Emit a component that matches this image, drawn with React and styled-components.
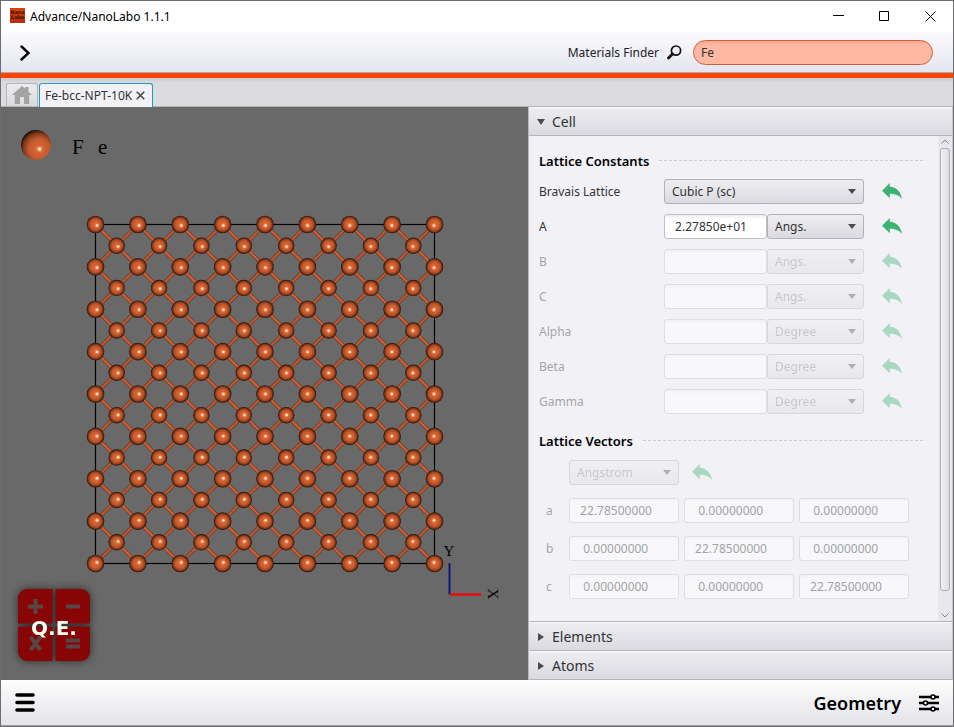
import React from 'react'
import styled, { createGlobalStyle } from 'styled-components';

const CONSTANTS = [
    { name: 'A', value: ' 2.27850e+01', unit: 'Angs.', enabled: true },
    { name: 'B', value: '', unit: 'Angs.' },
    { name: 'C', value: '', unit: 'Angs.' },
    { name: 'Alpha', value: '', unit: 'Degree' },
    { name: 'Beta', value: '', unit: 'Degree' },
    { name: 'Gamma', value: '', unit: 'Degree' },
]

const VECTORS = [
    { name: 'a', values: [' 22.78500000', '  0.00000000', '  0.00000000'] },
    { name: 'b', values: ['  0.00000000', ' 22.78500000', '  0.00000000'] },
    { name: 'c', values: ['  0.00000000', '  0.00000000', ' 22.78500000'] },
]

// bcc lattice seen along z
const CELLS = 8
const SIZE = 339
const STEP = SIZE / CELLS
const ORIGIN = { x: 94.5, y: 117.5 }

function buildLattice() {
    const corners = []
    const centers = []
    const bonds = []
    for (let j = 0; j <= CELLS; j++) {
        for (let i = 0; i <= CELLS; i++) {
            corners.push({ x: ORIGIN.x + i * STEP, y: ORIGIN.y + j * STEP })
        }
    }
    for (let j = 0; j < CELLS; j++) {
        for (let i = 0; i < CELLS; i++) {
            const x = ORIGIN.x + (i + 0.5) * STEP
            const y = ORIGIN.y + (j + 0.5) * STEP
            centers.push({ x, y })
            const h = STEP / 2
            bonds.push({ x, y, dx: -h, dy: -h }, { x, y, dx: h, dy: -h })
            bonds.push({ x, y, dx: -h, dy: h }, { x, y, dx: h, dy: h })
        }
    }
    return { corners, centers, bonds }
}

const LATTICE = buildLattice()

function Atom({ x, y, r }) {
    // the light sits in front of the middle of the cell
    const hx = x + (ORIGIN.x + SIZE / 2 - x) * 0.006 + 0.5
    const hy = y + (ORIGIN.y + SIZE / 2 - y) * 0.006
    return (
        <g>
            <circle cx={x} cy={y} r={r} fill="url(#atom)"/>
            <circle cx={hx} cy={hy} r="2.2" fill="#ff9a66" opacity="0.6"/>
            <circle cx={hx} cy={hy} r="1.2" fill="#ffe6d0"/>
        </g>
    )
}

function Scene() {
    return (
        <SceneSvg viewBox="0 0 527 573" role="img" aria-label="Fe bcc structure">
            <defs>
                <radialGradient id="atom">
                    <stop offset="0" stopColor="#de6838"/>
                    <stop offset="0.5" stopColor="#cb5c2d"/>
                    <stop offset="0.75" stopColor="#9c4521"/>
                    <stop offset="0.9" stopColor="#572411"/>
                    <stop offset="1" stopColor="#1e0b05"/>
                </radialGradient>
                <radialGradient id="legend" cx="0.6" cy="0.63" r="0.7">
                    <stop offset="0" stopColor="#e06c3c"/>
                    <stop offset="0.5" stopColor="#c2582c"/>
                    <stop offset="0.75" stopColor="#7c381c"/>
                    <stop offset="0.95" stopColor="#0c0503"/>
                </radialGradient>
            </defs>

            <circle cx="35" cy="38" r="15" fill="url(#legend)"/>
            <circle cx="38.5" cy="42" r="3" fill="#ff9a66" opacity="0.6"/>
            <circle cx="38.5" cy="42" r="1.6" fill="#fff0dc"/>
            <SceneText x="71" y="47" $size={21}>F</SceneText>
            <SceneText x="97" y="47" $size={21}>e</SceneText>

            <rect x={ORIGIN.x} y={ORIGIN.y} width={SIZE} height={SIZE} fill="none" stroke="#000" strokeWidth="1.2"/>
            {LATTICE.bonds.map((b, i) => (
                <g key={i}>
                    <line x1={b.x} y1={b.y} x2={b.x + b.dx} y2={b.y + b.dy} stroke="#5e3a2b" strokeWidth="3.6"/>
                    <line x1={b.x} y1={b.y} x2={b.x + b.dx} y2={b.y + b.dy}
                        stroke={b.dx * b.dy > 0 ? '#cf5d30' : '#bc562e'} strokeWidth="2.4"/>
                </g>
            ))}
            {LATTICE.centers.map((a, i) => <Atom key={i} x={a.x} y={a.y} r={8.2}/>)}
            {LATTICE.corners.map((a, i) => <Atom key={i} x={a.x} y={a.y} r={8.8}/>)}

            <path d="M448.500 456V488" stroke="#0c0c8c" strokeWidth="1.8"/>
            <path d="M449 487.500H480" stroke="#f00808" strokeWidth="2.4"/>
            <rect x="448" y="487" width="1" height="1" fill="#0a8a20"/>
            <SceneText x="448" y="449" $size={15} textAnchor="middle">Y</SceneText>
            <SceneText x="0" y="0" $size={15} textAnchor="middle" transform="translate(487 487) rotate(90)">X</SceneText>
        </SceneSvg>
    )
}

function Undo({ label, disabled }) {
    return (
        <UndoButton type="button" aria-label={label} disabled={disabled}>
            <svg width="20" height="16" viewBox="0 0 20 16">
                <path d="M0 7.800L7.800 0V3.800C14 4.200 18.600 8 20 16C17 12.200 13 10.800 7.800 10.800V15.300Z" fill="#3cb371"/>
            </svg>
        </UndoButton>
    )
}

function Combo({ label, id, value, disabled }) {
    return (
        <ComboBox $disabled={disabled}>
            <select id={id} aria-label={label} defaultValue={value} disabled={disabled}>
                <option>{value}</option>
            </select>
            <Caret/>
        </ComboBox>
    )
}

function App() {
    return (
        <Window>
            <GlobalStyle/>
            <TitleBar>
                <Logo width="15" height="15" viewBox="0 0 15 15" aria-hidden="true">
                    <defs>
                        <linearGradient id="logo" x2="0" y2="1">
                            <stop offset="0" stopColor="#dc4410"/>
                            <stop offset="1" stopColor="#b52d06"/>
                        </linearGradient>
                    </defs>
                    <rect width="15" height="15" fill="url(#logo)"/>
                    <text x="7.5" y="6" textAnchor="middle">Nano</text>
                    <text x="7.5" y="11" textAnchor="middle">Labo</text>
                </Logo>
                <Title>Advance/NanoLabo 1.1.1</Title>
                <WindowButton type="button" aria-label="Minimize">
                    <svg width="11" height="11"><path d="M0 4.500H11"/></svg>
                </WindowButton>
                <WindowButton type="button" aria-label="Maximize">
                    <svg width="11" height="11"><path d="M0.500 0.500H9.500V9.500H0.500Z"/></svg>
                </WindowButton>
                <WindowButton type="button" aria-label="Close">
                    <svg width="11" height="11"><path d="M0.500 0.500L10.500 10.500M10.500 0.500L0.500 10.500"/></svg>
                </WindowButton>
            </TitleBar>

            <Toolbar>
                <IconButton type="button" aria-label="Open menu">
                    <svg width="10" height="17" viewBox="0 0 10 17" fill="none" stroke="#000" strokeWidth="2.4" strokeLinecap="round">
                        <path d="M1.500 2.500L8.500 9L1.500 15.500"/>
                    </svg>
                </IconButton>
                <Finder>
                    <label htmlFor="finder">Materials Finder</label>
                    <svg width="15" height="15" viewBox="0 0 15 15" fill="none" stroke="#111">
                        <circle cx="9" cy="5.600" r="4.600" strokeWidth="1.700"/>
                        <path d="M5.500 9L1.500 13" strokeWidth="2.800" strokeLinecap="round"/>
                    </svg>
                    <FinderInput id="finder" type="text" defaultValue="Fe"/>
                </Finder>
            </Toolbar>

            <Tabs>
                <HomeTab type="button" aria-label="Home">
                    <svg width="20" height="18" viewBox="0 0 20 18">
                        <path d="M10 0L13 2.600V1H16.500V5.800L20 9H17.200V18H12V11H8V18H2.800V9H0Z" fill="#a3a3a3"/>
                    </svg>
                </HomeTab>
                <ActiveTab>
                    <span>Fe-bcc-NPT-10K</span>
                    <TabClose type="button" aria-label="Close tab">
                        <svg width="9" height="9"><path d="M0.700 0.700L8.300 8.300M8.300 0.700L0.700 8.300" stroke="#444" strokeWidth="1.500"/></svg>
                    </TabClose>
                </ActiveTab>
            </Tabs>

            <Main>
                <Viewport>
                    <Scene/>
                    <Calculator type="button">
                        <svg width="72" height="72" viewBox="0 0 72 72" aria-hidden="true">
                            <path d="M9 0H34.500V34.500H0V9A9 9 0 0 1 9 0Z
                                M37.500 0H63A9 9 0 0 1 72 9V34.500H37.500Z
                                M0 37.500H34.500V72H9A9 9 0 0 1 0 63Z
                                M37.500 37.500H72V63A9 9 0 0 1 63 72H37.500Z" fill="#870505"/>
                            <path d="M10 17.500H25M17.500 10V25M48 17.500H62M48 51.500H62M48 57.500H62M12.500 48L22.500 61M22.500 48L12.500 61"
                                stroke="#5a4444" strokeWidth="4"/>
                        </svg>
                        <span>Q.E.</span>
                    </Calculator>
                </Viewport>

                <Panel>
                    <Section type="button" aria-expanded="true"><Arrow $open/>Cell</Section>
                    <Content>
                        <Form>
                            <Heading>Lattice Constants</Heading>
                            <Row>
                                <label htmlFor="bravais">Bravais Lattice</label>
                                <Pair><Combo id="bravais" value="Cubic P (sc)"/></Pair>
                                <Undo label="Reset Bravais lattice"/>
                            </Row>
                            {CONSTANTS.map(c => (
                                <Row key={c.name} $disabled={!c.enabled}>
                                    <label htmlFor={'const-' + c.name}>{c.name}</label>
                                    <Pair>
                                        <Field id={'const-' + c.name} type="text" defaultValue={c.value} disabled={!c.enabled}/>
                                        <Combo label={c.name + ' unit'} value={c.unit} disabled={!c.enabled}/>
                                    </Pair>
                                    <Undo label={'Reset ' + c.name} disabled={!c.enabled}/>
                                </Row>
                            ))}
                            <Heading>Lattice Vectors</Heading>
                            <Vectors>
                                <VectorRow>
                                    <span/>
                                    <Combo label="Vector unit" value="Angstrom" disabled/>
                                    <Undo label="Reset vectors" disabled/>
                                </VectorRow>
                                {VECTORS.map(v => (
                                    <VectorRow key={v.name}>
                                        <label htmlFor={'vec-' + v.name}>{v.name}</label>
                                        {v.values.map((value, i) => (
                                            <Field key={i} id={i === 0 ? 'vec-' + v.name : undefined} type="text"
                                                aria-label={v.name + ' ' + 'xyz'[i]} defaultValue={value} disabled/>
                                        ))}
                                    </VectorRow>
                                ))}
                            </Vectors>
                        </Form>
                        <ScrollBar>
                            <svg width="8" height="5"><path d="M0.500 4.500L4 1L7.500 4.500"/></svg>
                            <Thumb/>
                            <svg width="8" height="5"><path d="M0.500 0.500L4 4L7.500 0.500"/></svg>
                        </ScrollBar>
                    </Content>
                    <Section type="button" aria-expanded="false"><Arrow/>Elements</Section>
                    <Section type="button" aria-expanded="false"><Arrow/>Atoms</Section>
                </Panel>
            </Main>

            <Footer>
                <IconButton type="button" aria-label="Menu">
                    <svg width="20" height="20" viewBox="0 0 20 20" stroke="#000" strokeWidth="3.600" strokeLinecap="round">
                        <path d="M2 2H18M2 9.500H18M2 17H18"/>
                    </svg>
                </IconButton>
                <Mode type="button">
                    <span>Geometry</span>
                    <svg width="20" height="18" viewBox="0 0 20 18" stroke="#000" strokeWidth="2.400" fill="#fff">
                        <path d="M0 3H20M0 9H20M0 15H20"/>
                        <circle cx="14" cy="3" r="2" strokeWidth="1.600"/>
                        <circle cx="6.500" cy="9" r="2" strokeWidth="1.600"/>
                        <circle cx="14" cy="15" r="2" strokeWidth="1.600"/>
                    </svg>
                </Mode>
            </Footer>
        </Window>
    )
}

export default App

const GlobalStyle=createGlobalStyle`
    *{
        box-sizing: border-box;
    }
    body{
        margin: 0;
        font-family: "Noto Sans", "Open Sans", sans-serif;
        font-size: 12px;
        color: #333;
    }
    button, input, select{
        font: inherit;
        color: inherit;
        margin: 0;
    }
    button{
        border: none;
        background: none;
        padding: 0;
    }
    svg{
        display: block;
        flex: none;
    }
`

const Window=styled.div`
    display: flex;
    flex-direction: column;
    min-height: 100vh;
    border: 1px solid #6d6d70;
    background: #f2f1f6;
`

const TitleBar=styled.header`
    display: flex;
    align-items: center;
    height: 31px;
    padding-left: 9px;
    background: #fff;
`

const Logo=styled.svg`
    margin-bottom: 2px;

    text{
        font-family: "DejaVu Sans", sans-serif;
        font-size: 5px;
        font-weight: bold;
        fill: #3a1206;
    }
`

const Title=styled.h1`
    flex: 1;
    margin: 0 0 0 5px;
    font-size: 12px;
    font-weight: normal;
    color: #000;
`

const WindowButton=styled.button`
    display: flex;
    align-items: center;
    justify-content: center;
    width: 46px;
    height: 29px;

    path{
        fill: none;
        stroke: #000;
    }
`

const Toolbar=styled.div`
    display: flex;
    align-items: center;
    justify-content: space-between;
    height: 41px;
    padding: 0 20px 0 19px;
    background: linear-gradient(#fbfbfe, #e5e5f0);
    border-bottom: 1px solid #a9abb8;
`

const IconButton=styled.button`
    display: flex;
    align-items: center;
`

const Finder=styled.div`
    display: flex;
    align-items: center;
    color: #222;

    svg{
        margin: 0 11px 0 8px;
    }
`

const FinderInput=styled.input`
    width: 240px;
    height: 25px;
    padding: 0 7px;
    border: 1px solid #cf5f38;
    border-radius: 13px;
    background: linear-gradient(#f0a88f, #ffb9a3 4px);
    color: #333;
`

const Tabs=styled.nav`
    display: flex;
    align-items: flex-end;
    gap: 1px;
    height: 34px;
    padding-left: 5px;
    background: linear-gradient(#cdcdd0, #dcdcde 5px);
    border-top: 5px solid #ff4500;
    border-bottom: 1px solid #b4b4b8;
`

const HomeTab=styled.button`
    display: flex;
    align-items: center;
    justify-content: center;
    width: 32px;
    height: 23px;
    border: 1px solid #b4b4ba;
    border-bottom: none;
    border-radius: 3px 3px 0 0;
    background: linear-gradient(#ececf0, #dadade);
`

const ActiveTab=styled.div`
    display: flex;
    align-items: center;
    gap: 4px;
    height: 24px;
    margin-bottom: -1px;
    padding: 0 7px 0 5px;
    border: 1px solid #1a9dc9;
    border-bottom: none;
    border-radius: 3px 3px 0 0;
    background: #f2f1f6;
`

const TabClose=styled.button`
    display: flex;
`

const Main=styled.main`
    flex: 1;
    display: grid;
    grid-template-columns: minmax(0, 1fr) 425px;
`

const Viewport=styled.section`
    position: relative;
    overflow: hidden;
    background: #696969;
`

const SceneSvg=styled.svg`
    width: 527px;
    height: 573px;
`

const SceneText=styled.text`
    font-family: "Liberation Serif", serif;
    font-size: ${p => p.$size}px;
    fill: #000;
`

const Calculator=styled.button`
    position: absolute;
    left: 17px;
    bottom: 19px;
    display: grid;
    place-items: center;
    filter: drop-shadow(0 0 4px rgba(0,0,0,0.6));

    svg, span{
        grid-area: 1 / 1;
    }
    span{
        padding-top: 6px;
        font-family: "DejaVu Sans", sans-serif;
        font-size: 20px;
        font-weight: bold;
        color: #fffff4;
    }
`

const Panel=styled.aside`
    display: flex;
    flex-direction: column;
    border-left: 1px solid #b9b9be;
    border-right: 1px solid #c6c6cc;
`

const Section=styled.button`
    display: flex;
    align-items: center;
    height: 29px;
    padding: 2px 0 0 8px;
    border-bottom: 1px solid #b5b5bb;
    background: linear-gradient(#ededf2, #dadae0);
    box-shadow: inset 0 1px #f8f8fb;
    font-size: 14px;
    line-height: 20px;
    text-align: left;
`

const Arrow=styled.i`
    width: 15px;
    height: 8px;

    &::before{
        content: "";
        display: block;
        width: ${p => p.$open ? 8 : 6}px;
        height: ${p => p.$open ? 6 : 8}px;
        margin-top: ${p => p.$open ? 1 : 0}px;
        margin-left: ${p => p.$open ? 0 : 1}px;
        background: #4c4c4e;
        clip-path: ${p => p.$open ? 'polygon(0 0, 100% 0, 50% 100%)' : 'polygon(0 0, 100% 50%, 0 100%)'};
    }
`

const Content=styled.div`
    flex: 1;
    display: flex;
    border-bottom: 1px solid #b5b5bb;
    background: #f2f1f6;
`

const Form=styled.form`
    flex: 1;
    padding: 12px 15px 0 10px;
`

const Heading=styled.h2`
    display: flex;
    align-items: center;
    gap: 10px;
    height: 25px;
    margin: 0;
    font-size: 13px;
    font-weight: 600;
    color: #000;

    &::after{
        content: "";
        flex: 1;
        border-top: 1px dashed #cbcbd0;
    }
`

const Row=styled.div`
    display: grid;
    grid-template-columns: 125px 200px auto;
    align-items: center;
    justify-content: start;
    height: 25px;
    margin: 6px 0 10px;

    & + &{
        margin-top: 0;
    }
    &:has(+ h2){
        margin-bottom: 14px;
    }
    label{
        color: ${p => p.$disabled ? '#a6a6aa' : '#333'};
    }
    > button{
        margin-left: 18px;
    }
`

const Pair=styled.div`
    display: flex;

    > div{
        flex: 1;
    }
`

const Field=styled.input`
    width: 103px;
    height: 25px;
    padding: 0 7px;
    border: 1px solid #c0c0c6;
    border-radius: 3px;
    background: linear-gradient(#ededf0, #fff 4px);

    &:disabled{
        border-color: #dededf;
        background: linear-gradient(#f2f2f5, #f8f8fa 4px);
        color: #a3a3a7;
    }
`

const ComboBox=styled.div`
    display: grid;
    align-items: center;
    height: 25px;
    border: 1px solid #b2b2b8;
    border-radius: 3px;
    background: linear-gradient(#eeeef2, #dadae0);
    color: #333;
    opacity: ${p => p.$disabled ? 0.4 : 1};

    select{
        grid-area: 1 / 1;
        height: 23px;
        padding: 0 7px;
        border: none;
        background: none;
        appearance: none;
        opacity: ${p => p.$disabled ? 0.5 : 1};
    }
`

const Caret=styled.i`
    grid-area: 1 / 1;
    justify-self: end;
    width: 8px;
    height: 5px;
    margin-right: 7px;
    background: #4c4c4e;
    clip-path: polygon(0 0, 100% 0, 50% 100%);
    pointer-events: none;
`

const UndoButton=styled.button`
    display: flex;
    padding-bottom: 2px;
    opacity: ${p => p.disabled ? 0.4 : 1};
`

const Vectors=styled.div`
    display: grid;
    gap: 13px;
    padding: 7px 0 0 7px;
    color: #a6a6aa;
`

const VectorRow=styled.div`
    display: grid;
    grid-template-columns: 18px repeat(3, 110px);
    align-items: center;
    column-gap: 5px;

    ${Field}{
        width: 100%;
    }
    > button{
        margin-left: 8px;
    }
`

const ScrollBar=styled.div`
    display: flex;
    flex-direction: column;
    align-items: center;
    width: 14px;
    padding: 3px 0;
    background: #e7e7ed;

    path{
        fill: none;
        stroke: #85858a;
    }
`

const Thumb=styled.div`
    flex: 1;
    width: 10px;
    margin: 4px 0 22px;
    border: 1px solid #aeaeb5;
    border-radius: 3px;
    background: linear-gradient(90deg, #f0f0f5, #dcdce2);
`

const Footer=styled.footer`
    display: flex;
    align-items: center;
    justify-content: space-between;
    height: 46px;
    padding: 0 14px;
    background: linear-gradient(#fdfdfd, #e4e4e9);
    border-bottom: 1px solid #a2a2a6;
`

const Mode=styled.button`
    display: flex;
    align-items: center;
    gap: 18px;
    font-size: 18px;
    font-weight: 600;
    color: #000;
`
